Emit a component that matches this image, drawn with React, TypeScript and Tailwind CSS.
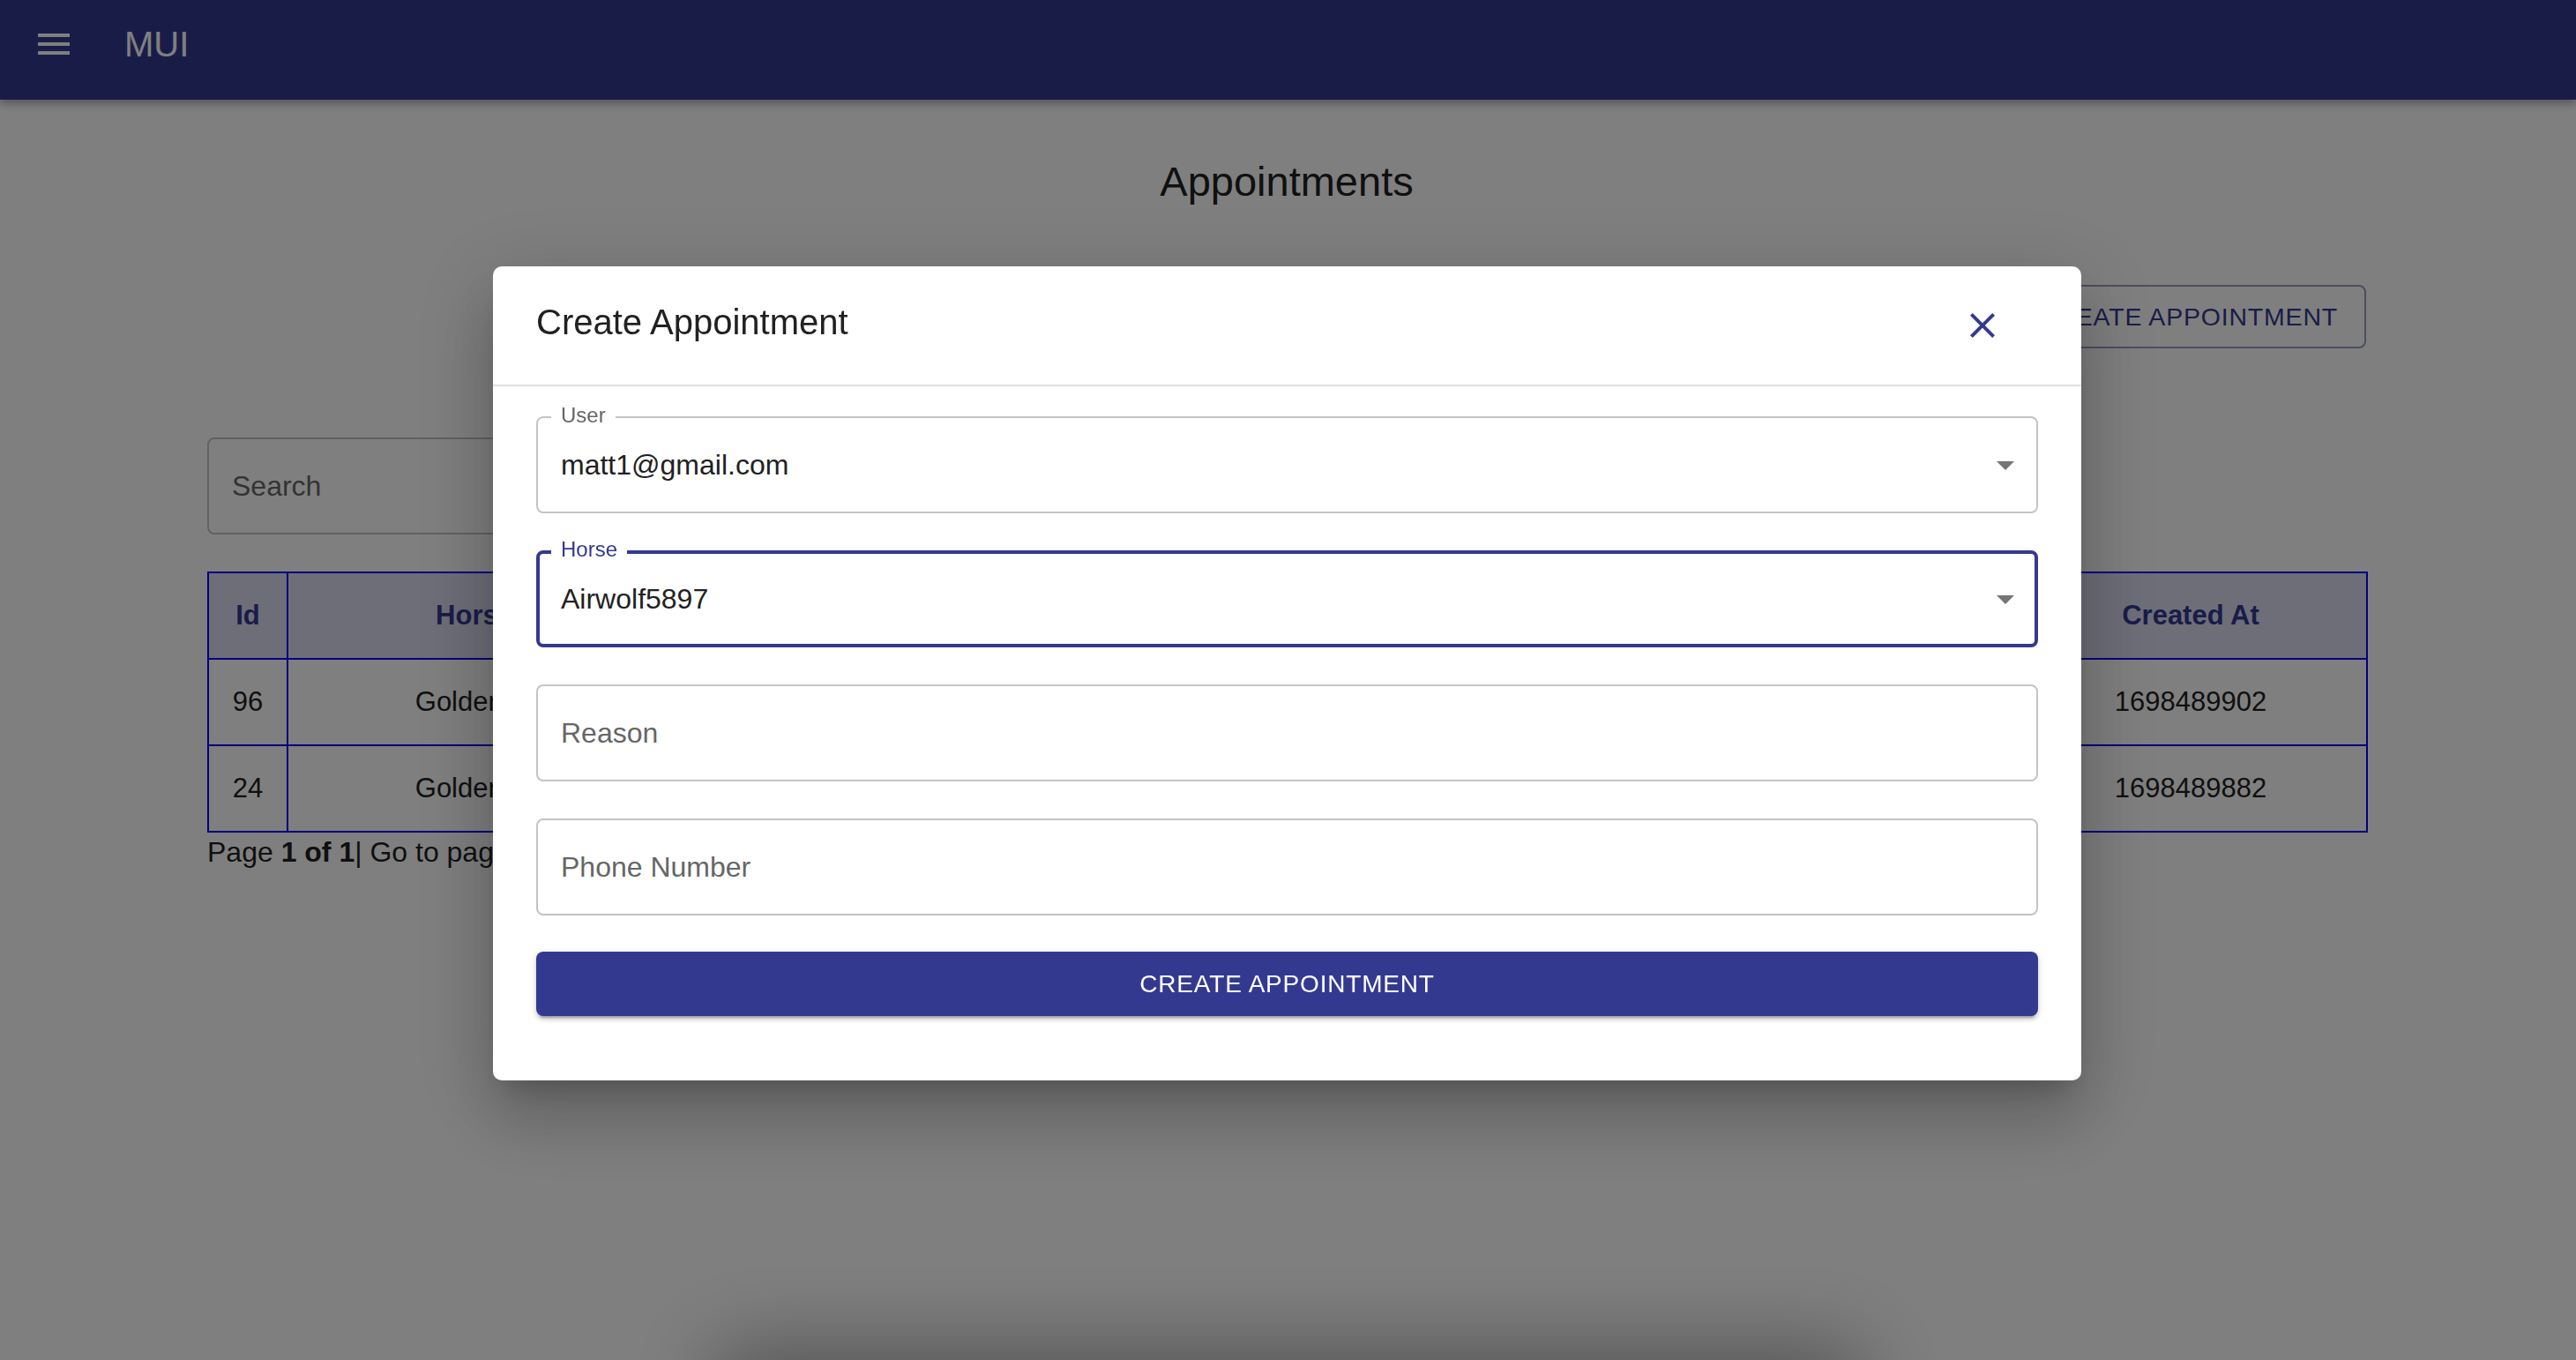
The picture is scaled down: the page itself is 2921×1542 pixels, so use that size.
import { ReactNode } from "react";

type Appointment = {
  id: number;
  horse: string;
  user: string;
  reason: string;
  phone: string;
  createdAt: number;
};

const appointments: Appointment[] = [
  {
    id: 96,
    horse: "Golden12",
    user: "matt1@gmail.com",
    reason: "Checkup",
    phone: "5551234567",
    createdAt: 1698489902,
  },
  {
    id: 24,
    horse: "Golden12",
    user: "matt1@gmail.com",
    reason: "Shoeing",
    phone: "5559876543",
    createdAt: 1698489882,
  },
];

const columns = ["Id", "Horse", "User", "Reason", "Phone Number", "Created At"];

const ArrowDropDown = () => (
  <svg viewBox="0 0 24 24" className="h-[48px] w-[48px] shrink-0 fill-[#757575]">
    <path d="M7 10l5 5 5-5z" />
  </svg>
);

interface FieldProps {
  label: string;
  value?: string;
  focused?: boolean;
  select?: boolean;
}

const OutlinedField = ({ label, value, focused, select }: FieldProps) => {
  const shrunk = value !== undefined;
  return (
    <div
      className={`relative flex h-[110px] items-center rounded-[8px] bg-white ${
        focused
          ? "border-[4px] border-[#343990] pl-[24px] pr-[9px]"
          : "border-2 border-[#c4c4c4] pl-[26px] pr-[11px]"
      }`}
    >
      {shrunk && (
        <span
          className={`absolute bg-white px-[11px] text-[24px] leading-[24px] ${
            focused
              ? "-top-[17px] left-[13px] text-[#343990]"
              : "-top-[15px] left-[15px] text-[#666666]"
          }`}
        >
          {label}
        </span>
      )}
      <span className={`flex-1 text-[32px] ${shrunk ? "text-[#212121]" : "text-[#666666]"}`}>
        {shrunk ? value : label}
      </span>
      {select && <ArrowDropDown />}
    </div>
  );
};

const Cell = ({ children, head }: { children: ReactNode; head?: boolean }) =>
  head ? (
    <th className="h-[98px] border-2 border-[#0000ff] text-center font-bold text-[#343990]">
      {children}
    </th>
  ) : (
    <td className="h-[98px] border-2 border-[#0000ff] text-center text-[#212121]">{children}</td>
  );

const CreateAppointmentDialog = () => (
  <div className="fixed inset-0 z-50 flex justify-center bg-black/50 pr-[2px] pt-[302px]">
    <div className="h-fit w-[1801px] rounded-[10px] bg-white shadow-[0_22px_30px_-14px_rgba(0,0,0,0.2),0_48px_76px_6px_rgba(0,0,0,0.14),0_18px_92px_16px_rgba(0,0,0,0.12)]">
      <div className="flex h-[136px] items-center justify-between border-b-2 border-[#e0e0e0] pl-[49px] pr-[88px]">
        <h2 className="-mt-[8px] text-[40px] leading-none text-[#212121]">Create Appointment</h2>
        <button className="flex items-center justify-center">
          <svg viewBox="0 0 24 24" className="h-[48px] w-[48px] fill-[#343990]">
            <path d="M19 6.41 17.59 5 12 10.59 6.41 5 5 6.41 10.59 12 5 17.59 6.41 19 12 13.41 17.59 19 19 17.59 13.41 12z" />
          </svg>
        </button>
      </div>
      <div className="flex flex-col gap-[42px] px-[49px] pt-[34px]">
        <OutlinedField label="User" value="matt1@gmail.com" select />
        <OutlinedField label="Horse" value="Airwolf5897" focused select />
        <OutlinedField label="Reason" />
        <OutlinedField label="Phone Number" />
      </div>
      <div className="px-[49px] pb-[73px] pt-[41px]">
        <button className="h-[73px] w-full rounded-[8px] bg-[#343990] text-[28px] tracking-[0.8px] text-white shadow-[0_6px_2px_-4px_rgba(0,0,0,0.2),0_4px_4px_0_rgba(0,0,0,0.14),0_2px_10px_0_rgba(0,0,0,0.12)]">
          CREATE APPOINTMENT
        </button>
      </div>
    </div>
  </div>
);

const App = () => {
  return (
    <div className="relative h-screen overflow-hidden bg-white font-['Liberation_Sans',Arial,sans-serif]">
      <header className="flex h-[113px] items-center bg-[#343990] pb-[13px] pl-[37px] shadow-[0_4px_10px_rgba(0,0,0,0.35)]">
        <svg viewBox="0 0 24 24" className="h-[48px] w-[48px] fill-white">
          <path d="M3 18h18v-2H3zm0-5h18v-2H3zm0-7v2h18V6z" />
        </svg>
        <span className="ml-[56px] text-[40px] leading-none text-white">MUI</span>
      </header>

      <main className="ml-[235px] flex w-[2448px] flex-col">
        <h1 className="mt-[69px] text-center text-[47px] leading-none text-[#212121]">Appointments</h1>
        <div className="mt-[94px] flex justify-end">
          <button className="h-[72px] rounded-[8px] border-2 border-[#343990]/50 px-[30px] text-[28.5px] tracking-[0.8px] text-[#343990]">
            CREATE APPOINTMENT
          </button>
        </div>
        <div className="mt-[101px] flex h-[110px] w-[640px] items-center rounded-[8px] border-2 border-[#c4c4c4] px-[26px] text-[32px] text-[#666666]">
          Search
        </div>
        <table className="mt-[42px] w-full table-fixed border-collapse text-[31px]">
          <colgroup>
            <col className="w-[90px]" />
            <col className="w-[424px]" />
            <col className="w-[500px]" />
            <col className="w-[500px]" />
            <col className="w-[534px]" />
            <col className="w-[400px]" />
          </colgroup>
          <thead className="bg-[#dcdcf2]">
            <tr>
              {columns.map((c) => (
                <Cell key={c} head>
                  {c}
                </Cell>
              ))}
            </tr>
          </thead>
          <tbody>
            {appointments.map((a) => (
              <tr key={a.id}>
                <Cell>{a.id}</Cell>
                <Cell>{a.horse}</Cell>
                <Cell>{a.user}</Cell>
                <Cell>{a.reason}</Cell>
                <Cell>{a.phone}</Cell>
                <Cell>{a.createdAt}</Cell>
              </tr>
            ))}
          </tbody>
        </table>
        <p className="text-[32px] leading-[45px] text-[#212121]">
          Page <strong>1 of 1</strong>| Go to page:
        </p>
      </main>

      <div className="mx-auto mt-[570px] h-[300px] w-[1240px] bg-white shadow-[0_0_90px_30px_rgba(0,0,0,0.35)]" />

      <CreateAppointmentDialog />
    </div>
  );
};

export default App;
